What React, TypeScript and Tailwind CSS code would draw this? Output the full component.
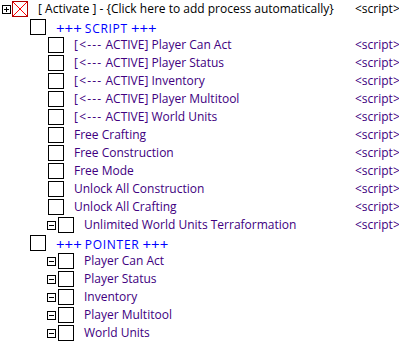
type Row = {
  label: string
  level: 0 | 1 | 2 | 3
  kind: 'header' | 'group' | 'script'
  box?: 'plus' | 'minus'
  script?: boolean
}

const rows: Row[] = [
  { label: '[ Activate ] - {Click here to add process automatically}', level: 0, kind: 'header', box: 'plus', script: true },
  { label: 'SCRIPT', level: 1, kind: 'group' },
  { label: '[<--- ACTIVE] Player Can Act', level: 2, kind: 'script', script: true },
  { label: '[<--- ACTIVE] Player Status', level: 2, kind: 'script', script: true },
  { label: '[<--- ACTIVE] Inventory', level: 2, kind: 'script', script: true },
  { label: '[<--- ACTIVE] Player Multitool', level: 2, kind: 'script', script: true },
  { label: '[<--- ACTIVE] World Units', level: 2, kind: 'script', script: true },
  { label: 'Free Crafting', level: 2, kind: 'script', script: true },
  { label: 'Free Construction', level: 2, kind: 'script', script: true },
  { label: 'Free Mode', level: 2, kind: 'script', script: true },
  { label: 'Unlock All Construction', level: 2, kind: 'script', script: true },
  { label: 'Unlock All Crafting', level: 2, kind: 'script', script: true },
  { label: 'Unlimited World Units Terraformation', level: 3, kind: 'script', box: 'minus', script: true },
  { label: 'POINTER', level: 1, kind: 'group' },
  { label: 'Player Can Act', level: 3, kind: 'script', box: 'minus' },
  { label: 'Player Status', level: 3, kind: 'script', box: 'minus' },
  { label: 'Inventory', level: 3, kind: 'script', box: 'minus' },
  { label: 'Player Multitool', level: 3, kind: 'script', box: 'minus' },
  { label: 'World Units', level: 3, kind: 'script', box: 'minus' },
]

const indent: Record<Row['level'], string> = {
  0: 'pl-[2px]',
  1: 'pl-[30px]',
  2: 'pl-[48px]',
  3: 'pl-[47px]',
}

const textColor: Record<Row['kind'], string> = {
  header: 'text-black',
  group: 'text-[#0000ff]',
  script: 'text-[#400080]',
}

function ExpandBox({ type }: { type: 'plus' | 'minus' }) {
  return (
    <div className="w-[9px] h-[9px] border border-black bg-white relative shrink-0">
      <div className="absolute left-[1px] right-[1px] top-[3px] h-px bg-black" />
      {type === 'plus' && <div className="absolute top-[1px] bottom-[1px] left-[3px] w-px bg-black" />}
    </div>
  )
}

function CheckBox({ crossed }: { crossed?: boolean }) {
  return (
    <div className={`w-[16px] h-[16px] shrink-0 ${crossed ? 'border border-[#b00000]' : 'border border-black'} bg-white`}>
      {crossed && (
        <svg width="14" height="14" viewBox="0 0 14 14" className="block">
          <path d="M0 0 L14 14 M14 0 L0 14" stroke="#ff0000" strokeWidth="1" />
          <rect x="6" y="6" width="2" height="2" fill="#ff0000" />
        </svg>
      )}
    </div>
  )
}

// the original's + glyphs and group caps run wider than Open Sans
function Label({ row }: { row: Row }) {
  if (row.kind === 'group') {
    return (
      <>
        <span className="text-[15px] relative top-[1px]">+++</span> <span className="tracking-[0.7px]">{row.label}</span>{' '}
        <span className="text-[15px] relative top-[1px]">+++</span>
      </>
    )
  }
  if (!row.label.startsWith('[<---')) return <>{row.label}</>
  return (
    <>
      <span className="tracking-[1.2px]">[{'<---'}</span>
      {row.label.slice(5)}
    </>
  )
}

export default function App() {
  return (
    <div
      className="w-[399px] h-[342px] bg-white overflow-hidden text-[12px] leading-none"
      style={{ fontFamily: '"Open Sans", "Noto Sans", sans-serif' }}
    >
      {rows.map((r, i) => (
        <div key={i} className="h-[18px] flex items-center">
          <div className={`w-[355px] shrink-0 flex items-center ${indent[r.level]}`}>
            {r.box && (
              <div className={r.box === 'plus' ? 'mr-[1px]' : 'mr-[2px]'}>
                <ExpandBox type={r.box} />
              </div>
            )}
            <CheckBox crossed={r.kind === 'header'} />
            <span className={`ml-[10px] whitespace-nowrap ${textColor[r.kind]}`}>
              <Label row={r} />
            </span>
          </div>
          {r.script && (
            <span className={`whitespace-nowrap ${r.kind === 'header' ? 'text-black' : 'text-[#400080]'}`}>{'<script>'}</span>
          )}
        </div>
      ))}
    </div>
  )
}
